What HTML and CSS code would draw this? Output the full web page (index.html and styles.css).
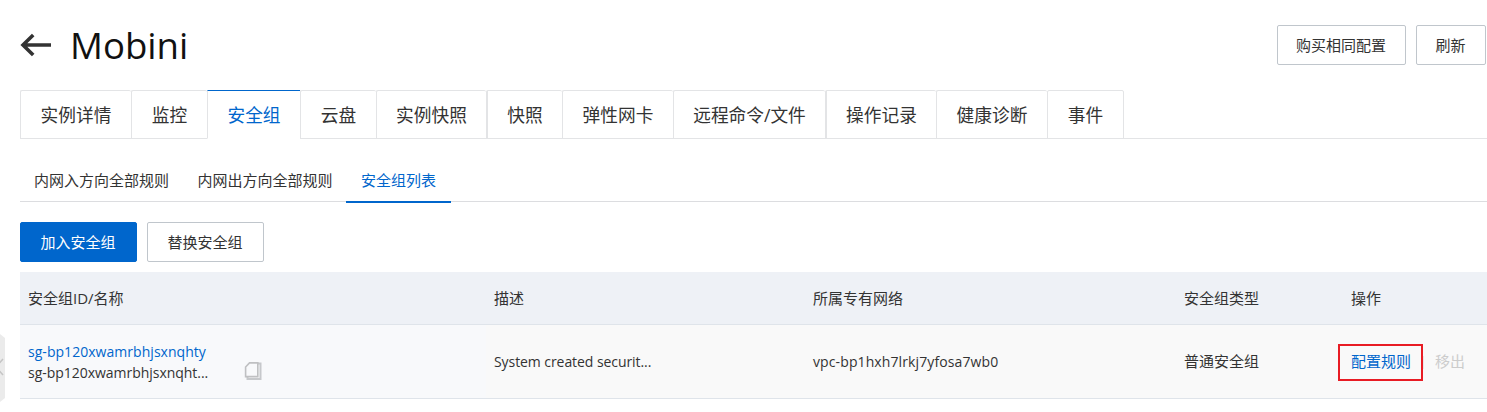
FILE: index.html
```html
<!DOCTYPE html>
<html lang="zh-CN">
<head>
<meta charset="utf-8">
<title>Mobini</title>
<link rel="stylesheet" href="styles.css">
</head>
<body>
<main class="page">
  <header class="header">
    <svg class="back" width="32" height="24" viewBox="0 0 32 24"><path d="M31 12H4M13.2 2L3 12l10.2 10" fill="none" stroke="#333" stroke-width="3.6"/></svg>
    <h1 class="title">Mobini</h1>
    <div class="header-actions">
      <button class="btn btn-buy">购买相同配置</button>
      <button class="btn btn-refresh">刷新</button>
    </div>
  </header>
  <nav class="tabs">
    <a class="tab w4">实例详情</a>
    <a class="tab w2">监控</a>
    <a class="tab w3 active">安全组</a>
    <a class="tab w2">云盘</a>
    <a class="tab short">实例快照</a>
    <a class="tab w2 thick">快照</a>
    <a class="tab w4">弹性网卡</a>
    <a class="tab w6">远程命令/文件</a>
    <a class="tab w4 thick">操作记录</a>
    <a class="tab w4">健康诊断</a>
    <a class="tab w2 last">事件</a>
  </nav>
  <nav class="subtabs">
    <a class="subtab">内网入方向全部规则</a>
    <a class="subtab">内网出方向全部规则</a>
    <a class="subtab current">安全组列表</a>
  </nav>
  <div class="toolbar">
    <button class="btn primary">加入安全组</button>
    <button class="btn btn-replace">替换安全组</button>
  </div>
  <section class="table">
    <div class="row head">
      <div>安全组ID/名称</div><div>描述</div><div>所属专有网络</div><div>安全组类型</div><div>操作</div>
    </div>
    <div class="row body">
      <div class="group">
        <div class="names">
          <a class="link id">sg-bp120xwamrbhjsxnqhty</a>
          <span class="name">sg-bp120xwamrbhjsxnqht...</span>
        </div>
        <svg class="copy" width="18" height="20" viewBox="0 0 18 20"><path d="M14 2.5h2.5v15.5H3.5V16" fill="none" stroke="#c6c8cb" stroke-width="2"/><path d="M5.5 1.9H13.8v13.7H1.6V6z" fill="#f8f9fb" stroke="#bfc0c2" stroke-width="1.6"/></svg>
      </div>
      <div class="desc">System created securit...</div>
      <div class="vpc">vpc-bp1hxh7lrkj7yfosa7wb0</div>
      <div class="type">普通安全组</div>
      <div class="ops"><a class="link rule">配置规则</a><span class="sep"></span><span class="disabled">移出</span></div>
    </div>
  </section>
</main>
<svg class="collapse" width="5" height="70" viewBox="0 0 5 70"><path d="M0 0l5 4v60l-5 4z" fill="#ebebeb"/><path d="M3 25L-4 33l7 8" fill="none" stroke="#c5c5c5" stroke-width="1.5"/></svg>
</body>
</html>
```
FILE: styles.css
```css
* { box-sizing: border-box; }
body {
  margin: 0;
  height: 412px;
  overflow: hidden;
  background: #fff;
  color: #333;
  font: 15px/20px "Open Sans", "Noto Sans CJK SC", sans-serif;
}
.page { padding-left: 20px; }
.header { display: flex; height: 90px; align-items: center; padding-right: 1px; }
.back { display: block; margin-right: 18px; }
.title { margin: 0 0 1px; font-size: 36.6px; line-height: 48px; font-weight: 400; color: #111; }
.header-actions { display: flex; gap: 10px; margin-left: auto; }
.btn {
  height: 40px;
  padding: 0 1px 0 0;
  border: 1px solid #c0c6cc;
  border-radius: 2px;
  background: #fff;
  color: #333;
  font: inherit;
  white-space: nowrap;
}
.btn-buy { width: 129px; }
.btn-refresh { width: 70px; }
.tabs { display: flex; height: 49px; border-bottom: 1px solid #e3e4e6; }
.tab {
  height: 49px;
  border: 1px solid #e3e4e6;
  border-right: 0;
  border-radius: 2px 2px 0 0;
  font-size: 17.7px;
  line-height: 49px;
  text-align: center;
  white-space: nowrap;
}
.w2 { width: 76px; }
.w3 { width: 93px; }
.w4 { width: 111px; }
.w6 { width: 152px; }
.short { width: 110px; }
.thick { border-left-width: 2px; }
.last { width: 77px; border-right: 1px solid #e3e4e6; }
.tab.active { border-left-color: #e3e4e6; border-top-color: #06c; border-bottom-color: #fff; border-radius: 0; color: #06c; }
.subtabs { display: flex; height: 43px; margin-top: 20px; border-bottom: 1px solid #dcdde0; }
.subtab { height: 44px; padding: 0 14px; margin-right: 0.4px; line-height: 43px; }
.subtab.current { width: 105px; margin-left: -0.8px; padding-left: 15px; border-bottom: 2px solid #06c; color: #06c; }
.toolbar { display: flex; gap: 10px; margin: 20px 0 10px; }
.primary { width: 117px; background: #06c; border-color: #06c; color: #fff; }
.btn-replace { width: 117px; }
.row {
  display: grid;
  grid-template-columns: 466px 319px 371px 167px 1fr;
  align-items: center;
  padding-left: 8px;
  border-bottom: 1px solid #dfe4ea;
  white-space: nowrap;
}
.head { height: 53px; background: #eef1f6; }
.body { height: 74px; background: linear-gradient(to right, #f8f9fb 466px, #f9f9f9 466px); }
.link { color: #06c; }
.group { display: flex; align-items: center; }
.names { display: flex; flex-direction: column; width: 216px; font-size: 14px; line-height: 21px; }
.id { letter-spacing: 0.04px; }
.name { letter-spacing: -0.03px; }
.copy { margin-top: 19px; }
.desc, .vpc { font-size: 14px; }
.desc { letter-spacing: -0.07px; }
.vpc { letter-spacing: 0.11px; }
.type { margin-top: -2px; }
.ops { display: flex; align-items: center; margin-top: 2px; }
.rule { padding: 5px 10px 7px 11px; margin-left: -13px; border: 2px solid #e81c24; height: 37px; line-height: 21px; }
.sep { width: 1px; height: 13px; margin-right: 11px; background: #e9e9e9; }
.disabled { margin-top: -3px; color: #ccc; }
.collapse { position: absolute; left: 0; top: 334px; }
```
